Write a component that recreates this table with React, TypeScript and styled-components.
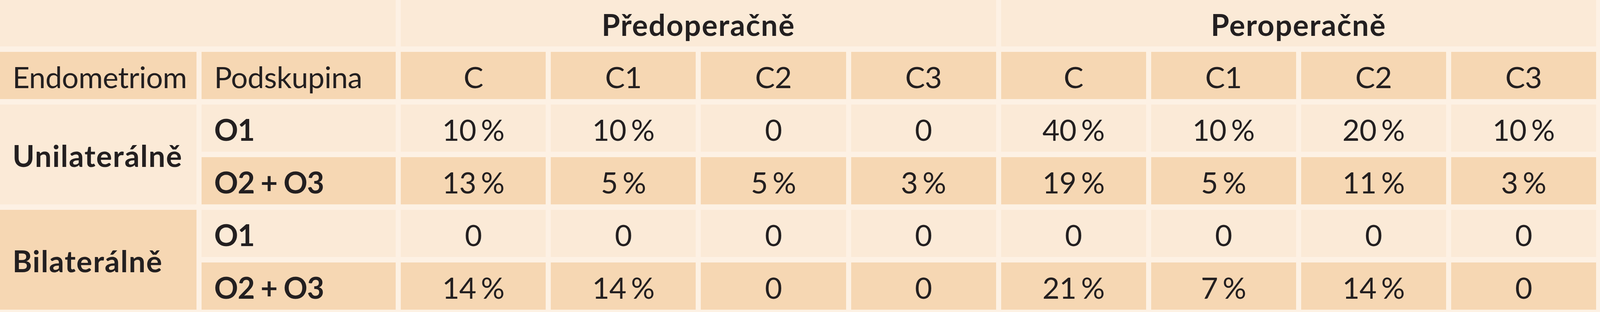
import styled, { createGlobalStyle } from "styled-components";

const GlobalStyle = createGlobalStyle`
  html, body {
    margin: 0;
    padding: 0;
    overflow: hidden;
    background: #fdf1e4;
  }
`;

type Tone = "light" | "dark";
type Kind = "title" | "label" | "sub" | "plain" | "value";

const columns = ["C", "C1", "C2", "C3", "C", "C1", "C2", "C3"];

const groups: {
  name: string;
  tone: Tone;
  rows: { sub: string; tone: Tone; values: string[] }[];
}[] = [
  {
    name: "Unilaterálně",
    tone: "light",
    rows: [
      { sub: "O1", tone: "light", values: ["10 %", "10 %", "0", "0", "40 %", "10 %", "20 %", "10 %"] },
      { sub: "O2 + O3", tone: "dark", values: ["13 %", "5 %", "5 %", "3 %", "19 %", "5 %", "11 %", "3 %"] },
    ],
  },
  {
    name: "Bilaterálně",
    tone: "dark",
    rows: [
      { sub: "O1", tone: "light", values: ["0", "0", "0", "0", "0", "0", "0", "0"] },
      { sub: "O2 + O3", tone: "dark", values: ["14 %", "14 %", "0", "0", "21 %", "7 %", "14 %", "0"] },
    ],
  },
];

const App = () => {
  return (
    <>
      <GlobalStyle />
      <Grid>
        <Cell $tone="light" $cols={2} />
        <Cell $tone="light" $cols={4} $kind="title">
          Předoperačně
        </Cell>
        <Cell $tone="light" $cols={4} $kind="title">
          Peroperačně
        </Cell>

        <Cell $tone="dark" $kind="plain">Endometriom</Cell>
        <Cell $tone="dark" $kind="plain">Podskupina</Cell>
        {columns.map((c, i) => (
          <Cell key={"h" + i} $tone="dark" $kind="value">
            {c}
          </Cell>
        ))}

        {groups.map((g) =>
          g.rows.map((r, ri) => (
            <RowGroup key={g.name + ri}>
              {ri === 0 && (
                <Cell $tone={g.tone} $rows={g.rows.length} $kind="label">
                  {g.name}
                </Cell>
              )}
              <Cell $tone={r.tone} $kind="sub">
                {r.sub}
              </Cell>
              {r.values.map((v, i) => (
                <Cell key={i} $tone={r.tone} $kind="value">
                  {v}
                </Cell>
              ))}
            </RowGroup>
          ))
        )}
      </Grid>
    </>
  );
};

// rows are flattened into the grid, so the wrapper makes no box of its own
const RowGroup = styled.div`
  display: contents;
`;

const Grid = styled.div`
  display: grid;
  box-sizing: border-box;
  width: 100%;
  padding-right: 10px;
  grid-template-columns: 583fr 576fr repeat(8, 430fr);
  grid-template-rows: 119px repeat(5, 121px);
  column-gap: 13px;
  row-gap: 14px;
  font-family: "Lato", "Liberation Sans", sans-serif;
  font-size: 76px;
  line-height: 1;
  color: #231f20;
`;

const Cell = styled.div<{ $tone: Tone; $kind?: Kind; $cols?: number; $rows?: number }>`
  display: flex;
  align-items: center;
  justify-content: ${(p) => (p.$kind === "title" || p.$kind === "value" ? "center" : "flex-start")};
  padding-left: ${(p) => (p.$kind === "title" || p.$kind === "value" ? 0 : 32)}px;
  padding-top: 6px;
  grid-column: span ${(p) => p.$cols ?? 1};
  grid-row: span ${(p) => p.$rows ?? 1};
  min-width: 0;
  white-space: nowrap;
  font-weight: ${(p) => (p.$kind === "title" || p.$kind === "label" || p.$kind === "sub" ? 700 : 400)};
  letter-spacing: ${(p) =>
    p.$kind === "title" || p.$kind === "label" ? "2px" : p.$kind === "sub" ? "-1px" : "-0.5px"};
  word-spacing: ${(p) => (p.$kind === "sub" ? "-2px" : p.$kind === "value" ? "-7px" : "0")};
  background: ${(p) => (p.$tone === "dark" ? "#f6d7b3" : "#fbead7")};
`;

export default App;
